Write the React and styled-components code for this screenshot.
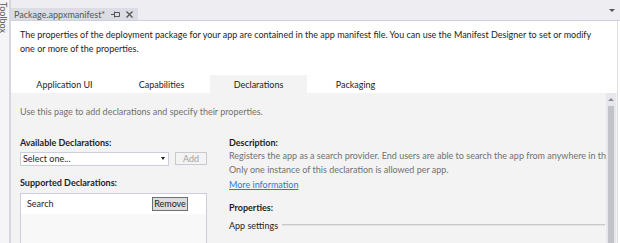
import React from 'react';
import styled, { createGlobalStyle } from 'styled-components';

const GlobalStyle = createGlobalStyle`
  html, body {
    margin: 0;
    padding: 0;
    background: #ffffff;
  }
  body {
    font-family: Lato, "Liberation Sans", sans-serif;
    font-size: 9px;
    color: #1e1e1e;
  }
`;

const Window = styled.div`
  display: flex;
  width: 620px;
  height: 243px;
  overflow: hidden;
  background: #ffffff;
`;

const ToolStrip = styled.div`
  flex: none;
  width: 9px;
  background: #f5f5f7;
  border-right: 2px solid #d6d7dd;
  overflow: hidden;
`;

const ToolLabel = styled.span`
  display: block;
  writing-mode: vertical-rl;
  margin: 2px 0 0 -2px;
  line-height: 10px;
  color: #555555;
`;

const Main = styled.div`
  flex: 1;
  min-width: 0;
  display: flex;
  flex-direction: column;
`;

const DocBar = styled.div`
  flex: none;
  height: 20px;
  display: flex;
  align-items: flex-end;
  background: #eeeef2;
  border-bottom: 1px solid #cdd0da;
`;

const DocTab = styled.div`
  box-sizing: border-box;
  width: 127px;
  height: 12px;
  display: flex;
  align-items: center;
  padding: 0 5px 0 3px;
  background: #dcdde4;
  color: #555555;
`;

const DocTitle = styled.span`
  flex: 1;
  min-width: 0;
  white-space: nowrap;
`;

const DocMenu = styled.span`
  align-self: center;
  margin: 0 5px 0 auto;
  border-left: 3px solid transparent;
  border-right: 3px solid transparent;
  border-top: 3px solid #555555;
`;

const Frame = styled.div`
  flex: 1;
  min-height: 0;
  display: flex;
  flex-direction: column;
  margin-right: 2px;
  border-right: 1px solid #dfdfe3;
`;

const Intro = styled.p`
  margin: 0;
  padding: 7px 0 0 9px;
  line-height: 13.5px;
  white-space: nowrap;
`;

const TabStrip = styled.div`
  flex: none;
  display: flex;
  margin-top: 20px;
  padding-left: 5px;
  height: 18px;
`;

const Tab = styled.div`
  width: 97px;
  display: flex;
  align-items: center;
  justify-content: center;
  background: ${p => (p.$active ? '#f3f3f3' : 'transparent')};
`;

const Panel = styled.div`
  flex: 1;
  min-height: 0;
  display: flex;
  background: #f3f3f3;
`;

const PanelBody = styled.div`
  flex: 1;
  min-width: 0;
  overflow: hidden;
  padding: 12px 0 0 9px;
`;

const Hint = styled.div`
  line-height: 13px;
  color: #717171;
`;

const Columns = styled.div`
  display: flex;
  gap: 22px;
  margin-top: 17.5px;
`;

const LeftColumn = styled.div`
  flex: none;
  width: 187px;
`;

const RightColumn = styled.div`
  flex: 1;
  min-width: 0;
  white-space: nowrap;
`;

const FieldLabel = styled.div`
  font-weight: 700;
  line-height: 13px;
  margin-top: ${p => p.$gap || 0}px;
`;

const SelectRow = styled.div`
  display: flex;
  gap: 6px;
  margin-top: 3px;
`;

const Select = styled.div`
  box-sizing: border-box;
  width: 149px;
  height: 14px;
  display: flex;
  align-items: center;
  justify-content: space-between;
  padding: 0 3px 0 2px;
  background: #ffffff;
  border: 1px solid #cccedb;
`;

const Caret = styled.span`
  border-left: 2.5px solid transparent;
  border-right: 2.5px solid transparent;
  border-top: 3px solid #1e1e1e;
`;

const AddButton = styled.button`
  box-sizing: border-box;
  width: 32px;
  height: 13px;
  padding: 0;
  font: inherit;
  color: #a2a2a2;
  background: #f3f3f3;
  border: 1px solid #c9c9cf;
`;

const ListBox = styled.div`
  height: 60px;
  margin-top: 4px;
  background: #f8f8f8;
  border: 1px solid #cccedb;
`;

const ListRow = styled.div`
  height: 20px;
  display: flex;
  align-items: center;
  justify-content: space-between;
  padding: 0 18px 0 6px;
  background: #ffffff;
`;

const RemoveButton = styled.button`
  box-sizing: border-box;
  width: 36px;
  height: 14px;
  padding: 0;
  font: inherit;
  color: #1e1e1e;
  background: #dddddd;
  border: 1px solid #707070;
`;

const DescText = styled.div`
  line-height: 14.5px;
  color: #717171;
  &:first-of-type {
    margin-top: 2px;
  }
`;

const MoreLink = styled.a`
  display: block;
  line-height: 14.5px;
  color: #2b7bd2;
  text-decoration: underline;
`;

const SettingsRow = styled.div`
  display: flex;
  align-items: center;
  gap: 4px;
  margin-top: 4.5px;
  line-height: 13px;
`;

const Rule = styled.span`
  flex: 1;
  margin-right: 1px;
  border-top: 1px solid #c8c8c8;
  border-bottom: 1px solid #e4e4e4;
`;

const ScrollBar = styled.div`
  flex: none;
  width: 10px;
  margin-right: 1px;
  display: flex;
  flex-direction: column;
  align-items: center;
  background: #e8e8ec;
`;

const ScrollUp = styled.div`
  flex: none;
  height: 13px;
  display: flex;
  align-items: center;
  &::after {
    content: '';
    border-left: 3px solid transparent;
    border-right: 3px solid transparent;
    border-bottom: 3px solid #868999;
  }
`;

const Thumb = styled.div`
  flex: 1;
  width: 6px;
  background: #c2c3c9;
`;

const PinIcon = () => (
  <svg width="9" height="7" viewBox="0 0 9 7" fill="none" stroke="#555" strokeWidth="1" style={{ flex: 'none' }}>
    <path d="M0 3.5H3M3.5 0.5V6.5M3.5 1.5H8.5V5.5H3.5" />
  </svg>
);

const CloseIcon = () => (
  <svg width="7" height="7" viewBox="0 0 7 7" fill="none" stroke="#555" strokeWidth="1.3" style={{ flex: 'none', marginLeft: 6 }}>
    <path d="M0.5 0.5L6.5 6.5M6.5 0.5L0.5 6.5" />
  </svg>
);

const tabs = ['Application UI', 'Capabilities', 'Declarations', 'Packaging'];

export default function App() {
  return (
    <>
      <GlobalStyle />
      <Window>
        <ToolStrip>
          <ToolLabel>Toolbox</ToolLabel>
        </ToolStrip>
        <Main>
          <DocBar>
            <DocTab>
              <DocTitle>Package.appxmanifest*</DocTitle>
              <PinIcon />
              <CloseIcon />
            </DocTab>
            <DocMenu />
          </DocBar>
          <Frame>
            <Intro>
              The properties of the deployment package for your app are contained in the app manifest file. You can use the Manifest Designer to set or modify
              <br />
              one or more of the properties.
            </Intro>
            <TabStrip>
              {tabs.map(t => (
                <Tab key={t} $active={t === 'Declarations'}>{t}</Tab>
              ))}
            </TabStrip>
            <Panel>
              <PanelBody>
                <Hint>Use this page to add declarations and specify their properties.</Hint>
                <Columns>
                  <LeftColumn>
                    <FieldLabel>Available Declarations:</FieldLabel>
                    <SelectRow>
                      <Select>
                        <span>Select one...</span>
                        <Caret />
                      </Select>
                      <AddButton disabled>Add</AddButton>
                    </SelectRow>
                    <FieldLabel $gap={10}>Supported Declarations:</FieldLabel>
                    <ListBox>
                      <ListRow>
                        <span>Search</span>
                        <RemoveButton>Remove</RemoveButton>
                      </ListRow>
                    </ListBox>
                  </LeftColumn>
                  <RightColumn>
                    <FieldLabel>Description:</FieldLabel>
                    <DescText>Registers the app as a search provider. End users are able to search the app from anywhere in the system.</DescText>
                    <DescText>Only one instance of this declaration is allowed per app.</DescText>
                    <MoreLink href="#">More information</MoreLink>
                    <FieldLabel $gap={9}>Properties:</FieldLabel>
                    <SettingsRow>
                      <span>App settings</span>
                      <Rule />
                    </SettingsRow>
                  </RightColumn>
                </Columns>
              </PanelBody>
              <ScrollBar>
                <ScrollUp />
                <Thumb />
              </ScrollBar>
            </Panel>
          </Frame>
        </Main>
      </Window>
    </>
  );
}
